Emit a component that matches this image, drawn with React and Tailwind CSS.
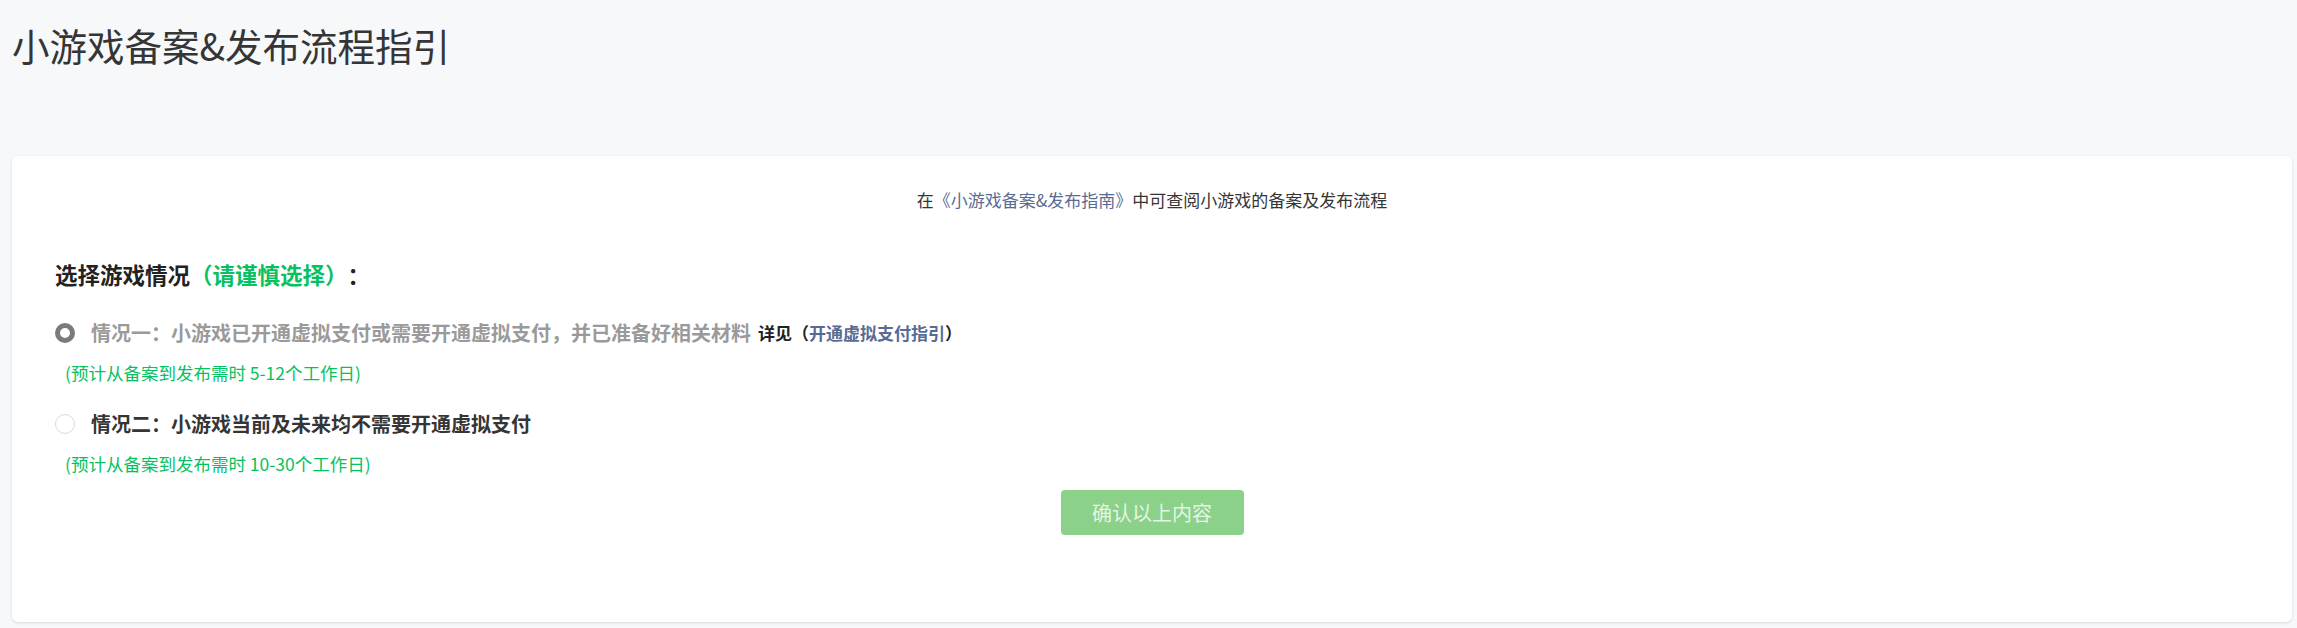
import React from "react";

const RadioOption = ({ checked, label, children, note }) => {
  return (
    <div>
      <label className="flex items-center h-[28px] cursor-pointer">
        {checked ? (
          <span className="w-[20px] h-[20px] rounded-full border-[5px] border-[#7b7b7b] bg-white shrink-0"></span>
        ) : (
          <span className="w-[20px] h-[20px] rounded-full border border-[#d9d9d9] bg-white shrink-0"></span>
        )}
        <span
          className={`ml-4 text-[20px] font-bold ${
            checked ? "text-[#9a9a9a]" : "text-[#353535]"
          }`}
        >
          {label}
        </span>
        {children}
      </label>
      <p className="ml-[10px] mt-[14px] text-[17.5px] leading-[23px] text-[#07c160]">
        {note}
      </p>
    </div>
  );
};

const App = () => {
  return (
    <div
      className="min-h-screen bg-[#f7f8fa] pt-[23px] pb-[6px] pl-3 pr-[5px] [text-spacing-trim:space-all]"
      style={{ fontFamily: '"Noto Sans CJK SC", "Noto Sans", sans-serif' }}
    >
      <h1 className="text-[37.5px] leading-[44px] font-normal text-[#353535]">
        小游戏备案&amp;发布流程指引
      </h1>

      <div className="mt-[89px] h-[466px] bg-white rounded-md shadow-[0_1px_3px_rgba(0,0,0,0.12)] px-[43px] pt-[33px]">
        <p className="text-center text-[17px] leading-[22px] text-[#353535]">
          在<a className="text-[#576b95]">《小游戏备案&amp;发布指南》</a>
          中可查阅小游戏的备案及发布流程
        </p>

        <h2 className="mt-[48px] text-[22.5px] leading-[30px] font-bold text-[#222]">
          选择游戏情况<span className="text-[#07c160]">（请谨慎选择）</span>：
        </h2>

        <div className="mt-[30px]">
          <RadioOption
            checked
            label="情况一：小游戏已开通虚拟支付或需要开通虚拟支付，并已准备好相关材料"
            note="(预计从备案到发布需时 5-12个工作日)"
          >
            <span className="ml-[7px] text-[17px] font-bold text-[#222]">
              详见（<a className="text-[#576b95]">开通虚拟支付指引</a>）
            </span>
          </RadioOption>
        </div>

        <div className="mt-[26px]">
          <RadioOption
            label="情况二：小游戏当前及未来均不需要开通虚拟支付"
            note="(预计从备案到发布需时 10-30个工作日)"
          />
        </div>

        <div className="mt-[15px] flex justify-center">
          <button className="w-[183px] h-[45px] rounded bg-[#8bd189] text-[20px] text-[#e5f5e4]">
            确认以上内容
          </button>
        </div>
      </div>
    </div>
  );
};

export default App;
